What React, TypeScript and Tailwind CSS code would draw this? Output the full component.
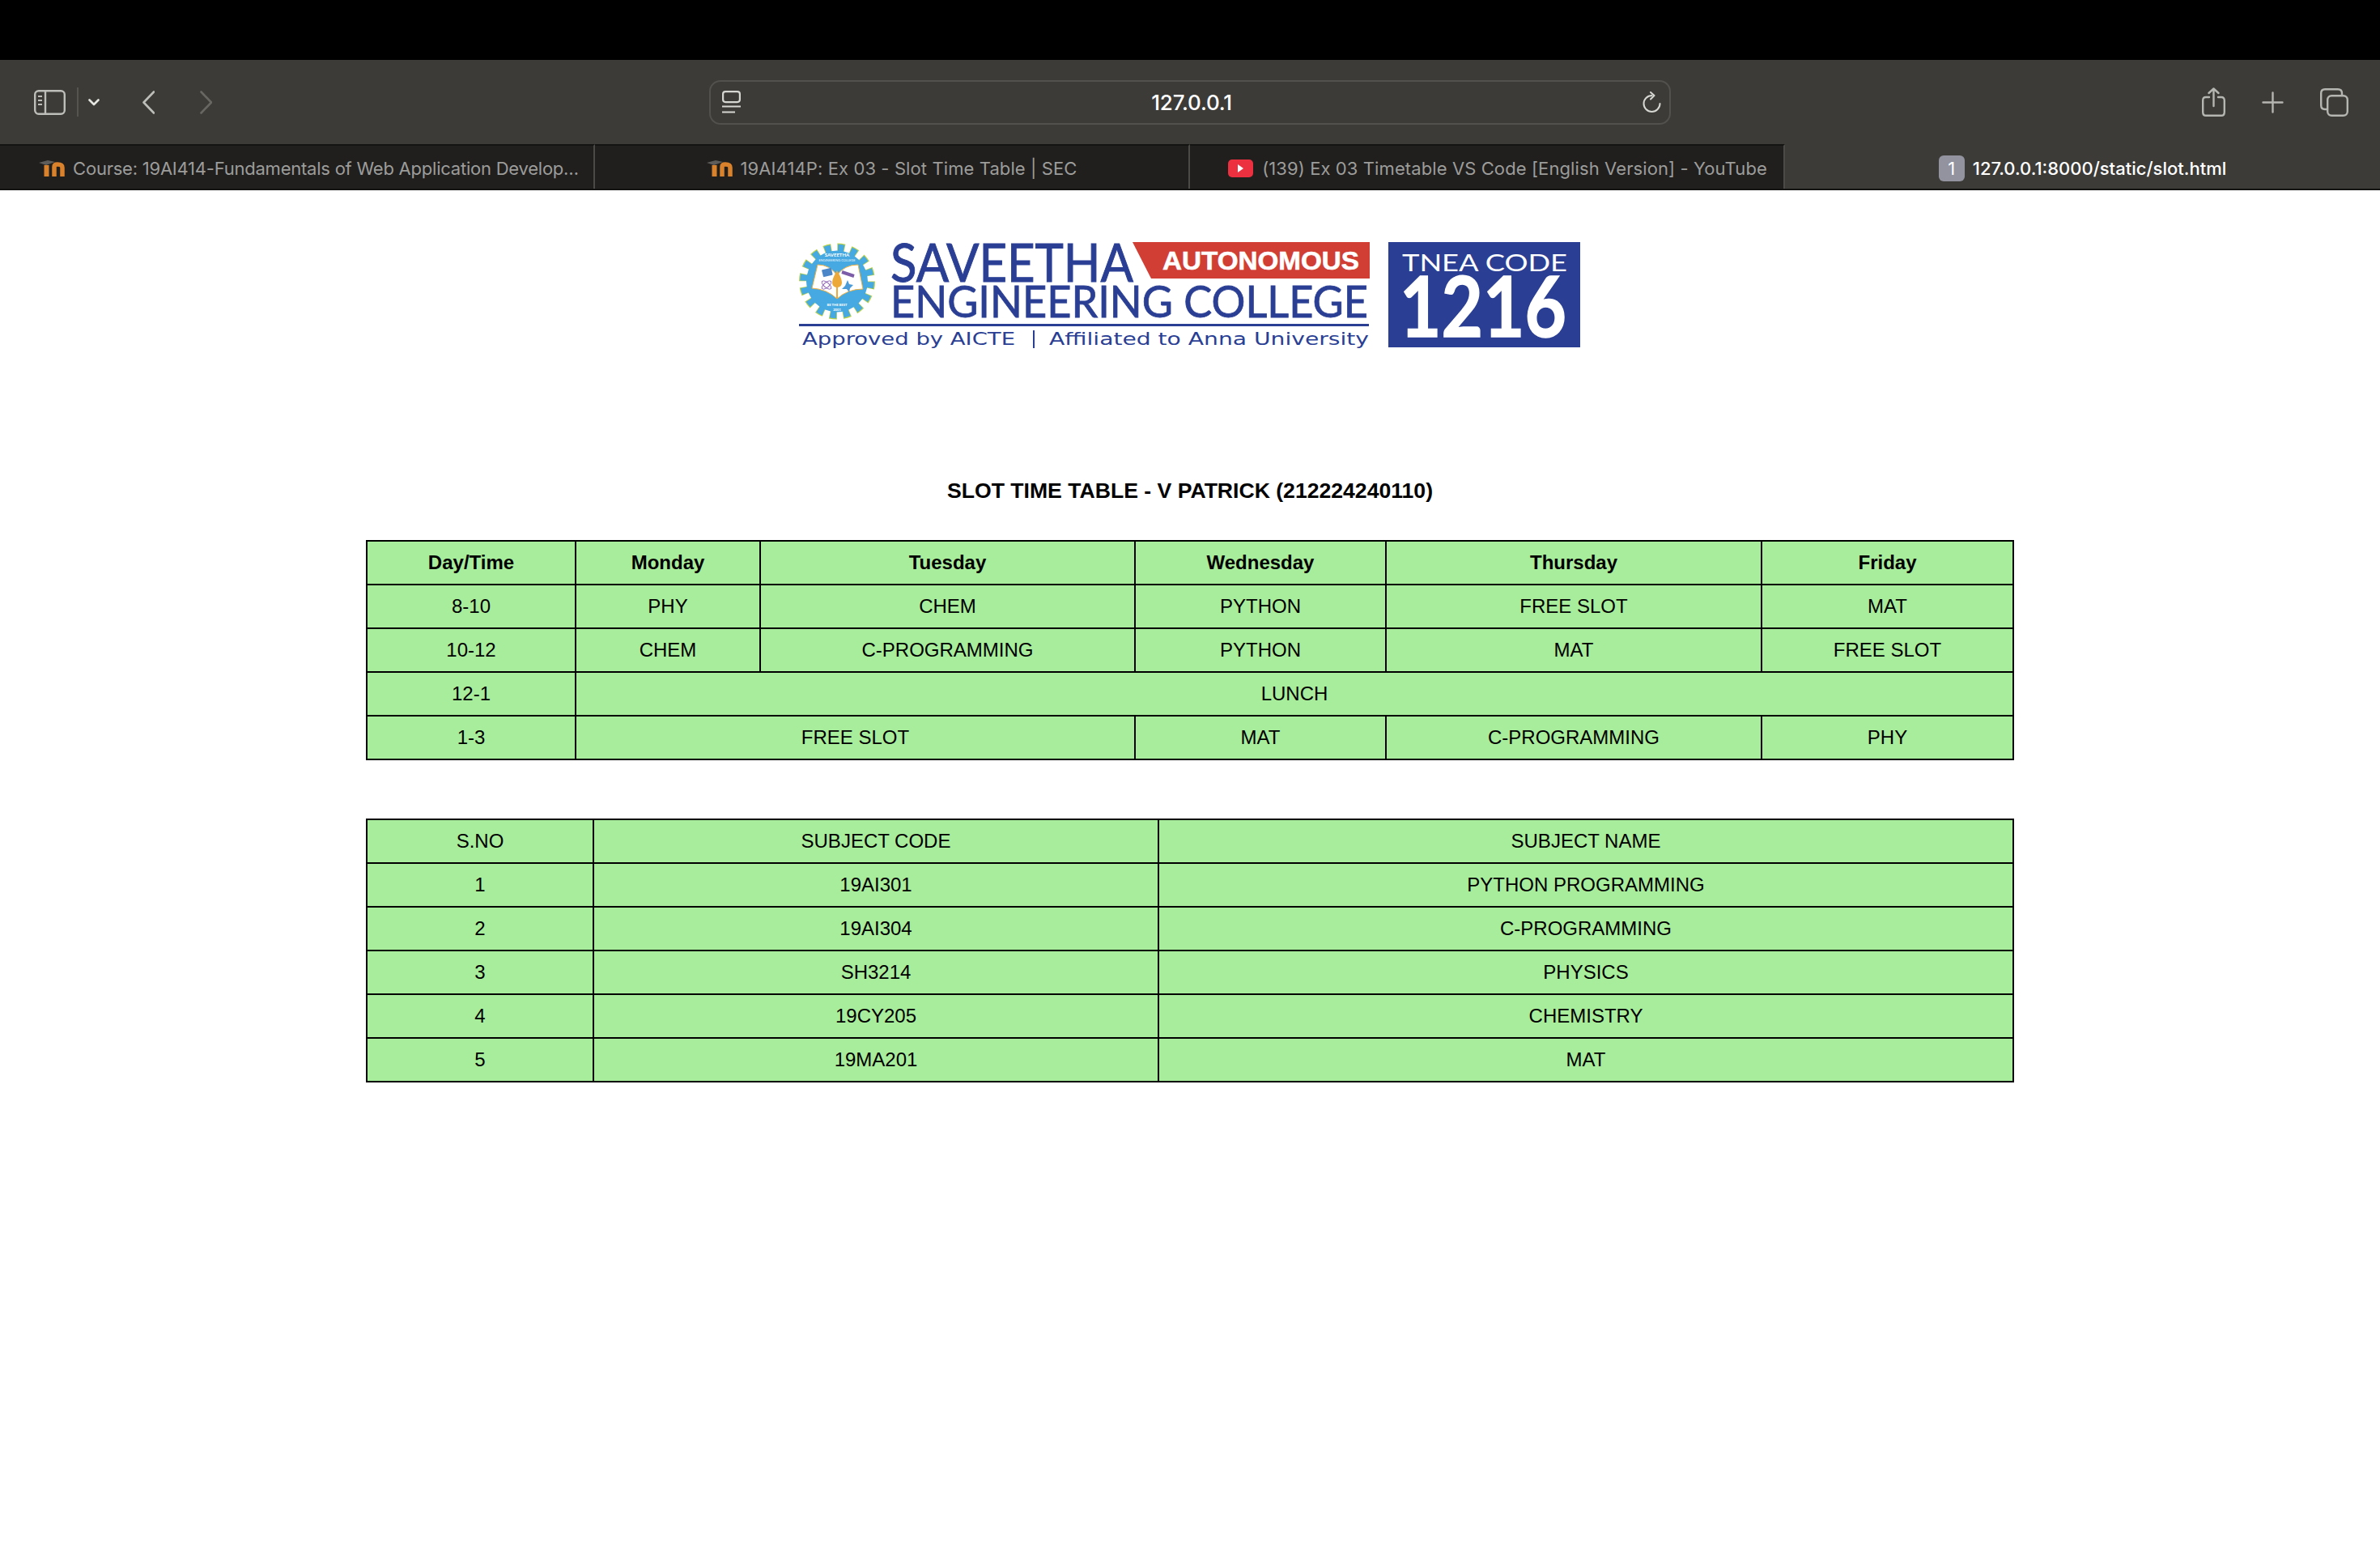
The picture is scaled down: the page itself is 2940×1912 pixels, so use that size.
import React from 'react';

type Cell = { text: string; span?: number };

const slotColumns = [258, 228, 463, 310, 464, 311];
const slotRows: Cell[][] = [
  [{ text: 'Day/Time' }, { text: 'Monday' }, { text: 'Tuesday' }, { text: 'Wednesday' }, { text: 'Thursday' }, { text: 'Friday' }],
  [{ text: '8-10' }, { text: 'PHY' }, { text: 'CHEM' }, { text: 'PYTHON' }, { text: 'FREE SLOT' }, { text: 'MAT' }],
  [{ text: '10-12' }, { text: 'CHEM' }, { text: 'C-PROGRAMMING' }, { text: 'PYTHON' }, { text: 'MAT' }, { text: 'FREE SLOT' }],
  [{ text: '12-1' }, { text: 'LUNCH', span: 5 }],
  [{ text: '1-3' }, { text: 'FREE SLOT', span: 2 }, { text: 'MAT' }, { text: 'C-PROGRAMMING' }, { text: 'PHY' }],
];

const subjectColumns = [280, 698, 1056];
const subjectRows: Cell[][] = [
  [{ text: 'S.NO' }, { text: 'SUBJECT CODE' }, { text: 'SUBJECT NAME' }],
  [{ text: '1' }, { text: '19AI301' }, { text: 'PYTHON PROGRAMMING' }],
  [{ text: '2' }, { text: '19AI304' }, { text: 'C-PROGRAMMING' }],
  [{ text: '3' }, { text: 'SH3214' }, { text: 'PHYSICS' }],
  [{ text: '4' }, { text: '19CY205' }, { text: 'CHEMISTRY' }],
  [{ text: '5' }, { text: '19MA201' }, { text: 'MAT' }],
];

const MoodleIcon = () => (
  <svg width="32" height="22" viewBox="0 0 32 22" className="shrink-0 blur-[0.5px]">
    <path d="M0 4 L11 1 L20 3 L9 7 Z" fill="#5e5d5b" />
    <path d="M9.5 7 V21" stroke="#d9822b" strokeWidth="6" />
    <path d="M19 21 V9 Q19 6 23 6 Q29 6 29 10 V21" stroke="#d9822b" strokeWidth="5.5" fill="none" />
  </svg>
);

const YoutubeIcon = () => (
  <svg width="31" height="22" viewBox="0 0 31 22" className="shrink-0">
    <rect width="31" height="22" rx="5" fill="#ed3040" />
    <path d="M12 6 L19 11 L12 16 Z" fill="#fff" />
  </svg>
);

const SidebarIcon = () => (
  <svg width="39" height="31" viewBox="0 0 39 31" fill="none" stroke="#bdbdb9" strokeWidth="2.4">
    <rect x="1.2" y="1.2" width="36.6" height="28.6" rx="4.5" />
    <path d="M14 1 V30" />
    <path d="M5 8 H10 M5 13 H10 M5 18 H10" strokeWidth="1.8" />
  </svg>
);

const Chevron = ({ d, color, w, h, width = 2.6 }: { d: string; color: string; w: number; h: number; width?: number }) => (
  <svg width={w} height={h} viewBox={`0 0 ${w} ${h}`} fill="none" stroke={color} strokeWidth={width} strokeLinecap="round" strokeLinejoin="round" className="shrink-0">
    <path d={d} />
  </svg>
);

const PageIcon = () => (
  <svg width="23" height="28" viewBox="0 0 23 28" fill="none" stroke="#d6d6d3" strokeWidth="2.2" className="shrink-0">
    <rect x="1.1" y="1.1" width="20.8" height="13" rx="3" />
    <path d="M0 19.5 H23 M0 26.5 H16" />
  </svg>
);

const ReloadIcon = () => (
  <svg width="23" height="26" viewBox="0 0 23 26" fill="none" stroke="#d6d6d3" strokeWidth="2" strokeLinecap="round" strokeLinejoin="round" className="shrink-0">
    <path d="M11.5 5 A10 10 0 1 0 21.5 15" />
    <path d="M10 1 L14.5 5 L10 9.5" />
  </svg>
);

const ShareIcon = () => (
  <svg width="29" height="36" viewBox="0 0 29 36" fill="none" stroke="#b5b5b1" strokeWidth="2.4" strokeLinecap="round" strokeLinejoin="round">
    <path d="M9 12 H5 Q1.2 12 1.2 16 V30.5 Q1.2 34.8 5 34.8 H24 Q27.8 34.8 27.8 30.5 V16 Q27.8 12 24 12 H20" />
    <path d="M14.5 23 V1.5 M8.5 7 L14.5 1.5 L20.5 7" />
  </svg>
);

const PlusIcon = () => (
  <svg width="27" height="27" viewBox="0 0 27 27" fill="none" stroke="#b5b5b1" strokeWidth="2.4" strokeLinecap="round">
    <path d="M1.5 13.5 H25.5 M13.5 1.5 V25.5" />
  </svg>
);

const TabsIcon = () => (
  <svg width="35" height="35" viewBox="0 0 35 35" fill="none" stroke="#b5b5b1" strokeWidth="2.4">
    <path d="M8 26 H6 Q1.2 26 1.2 21 V6 Q1.2 1.2 6 1.2 H22 Q27 1.2 27 6 V8.5" />
    <rect x="9.2" y="9.2" width="24.6" height="24.6" rx="5" />
  </svg>
);

const Logo = () => {
  const sans = "font-['Lato',sans-serif]";
  const arial = "font-['Liberation_Sans',sans-serif]";
  const deja = "font-['DejaVu_Sans',sans-serif]";
  return (
    <svg width="966" height="131" viewBox="0 0 966 131">
      {/* gear seal */}
      <circle cx="47" cy="48.5" r="41.5" fill="none" stroke="#b9d24a" strokeWidth="11" strokeDasharray="9 7.3" />
      <circle cx="47" cy="48.5" r="41.5" fill="none" stroke="#46a9e1" strokeWidth="8.5" strokeDasharray="7.5 8.8" strokeDashoffset="-0.75" />
      <circle cx="47" cy="48.5" r="38" fill="#46a9e1" />
      <path d="M23 28 Q38 28 47 41 V70 Q34 58 16 57 Z" fill="#fff" stroke="#f0b040" strokeWidth="1" />
      <path d="M73 28 Q56 28 47 41 V70 Q60 58 79 58 Z" fill="#fff" stroke="#f0b040" strokeWidth="1" />
      <path d="M47 35 Q53 45 53 50 Q53 55 48 56 V70 H46 V56 Q41 55 41 50 Q41 45 47 35 Z" fill="#eca93a" />
      <rect x="29" y="33" width="12" height="9" rx="1" fill="#4a86c8" transform="rotate(-14 35 38)" />
      <path d="M53 37 L68 42" stroke="#7c5ca8" strokeWidth="4" />
      <ellipse cx="34" cy="53" rx="7" ry="3" fill="none" stroke="#8a5bb0" strokeWidth="1" transform="rotate(40 34 53)" />
      <ellipse cx="34" cy="53" rx="7" ry="3" fill="none" stroke="#8a5bb0" strokeWidth="1" transform="rotate(-40 34 53)" />
      <path d="M60 47 L62 52 L67 53 L63 57 L62 62 L59 58 L53 58 L57 54 Z" fill="#4a9bd8" />
      <text x="47" y="18" textAnchor="middle" fontSize="6" fontWeight="700" fill="#fff" className={sans}>SAVEETHA</text>
      <text x="47" y="24" textAnchor="middle" fontSize="4" fill="#eaf6fd" className={sans}>ENGINEERING COLLEGE</text>
      <text x="47" y="79" textAnchor="middle" fontSize="4.2" fontWeight="700" fill="#fff" className={sans}>BE THE BEST</text>
      <text x="47" y="85" textAnchor="middle" fontSize="4.2" fontWeight="700" fill="#fff" className={sans}>2001</text>
      {/* wordmark */}
      <path d="M412 0 H705 V45 H435 Z" fill="#d03e34" />
      <text x="449" y="34" fontSize="32" fontWeight="700" fill="#fff" stroke="#fff" strokeWidth="0.6" textLength="243" lengthAdjust="spacingAndGlyphs" className={arial}>AUTONOMOUS</text>
      <text x="113" y="49" fontSize="66" fill="#2a3f94" stroke="#2a3f94" strokeWidth="1" textLength="300" lengthAdjust="spacingAndGlyphs" className={sans}>SAVEETHA</text>
      <text x="113" y="93" fontSize="54" fill="#2a3f94" stroke="#2a3f94" strokeWidth="0.8" textLength="590" lengthAdjust="spacingAndGlyphs" className={sans}>ENGINEERING COLLEGE</text>
      <rect x="0" y="101" width="704" height="3" fill="#2a3f94" />
      <text x="4" y="127" fontSize="22" fill="#2a3f94" textLength="263" lengthAdjust="spacingAndGlyphs" className={deja}>Approved by AICTE</text>
      <rect x="289" y="109" width="2" height="22" fill="#2a3f94" />
      <text x="309" y="127" fontSize="22" fill="#2a3f94" textLength="395" lengthAdjust="spacingAndGlyphs" className={deja}>Affiliated to Anna University</text>
      {/* tnea box */}
      <rect x="728" y="0" width="237" height="130" fill="#2a3f94" />
      <text x="745" y="36" fontSize="28" fill="#fff" textLength="204" lengthAdjust="spacingAndGlyphs" className={sans}>TNEA CODE</text>
      <text x="742" y="117" fontSize="104" fontWeight="700" fill="#fff" stroke="#fff" strokeWidth="1.5" textLength="206" lengthAdjust="spacingAndGlyphs" className={sans}>1216</text>
    </svg>
  );
};

const Tab = ({ children, text, className, textClass }: { children?: React.ReactNode; text: string; className: string; textClass: string }) => (
  <div className={`flex items-center justify-center border-t-2 border-t-[#141413] border-r-2 border-r-[#4b4a47] bg-[#201f1e] pt-[3px] ${className}`}>
    {children}
    <span className={`whitespace-nowrap text-[22px] text-[#9c9c9a] ${textClass}`}>{text}</span>
  </div>
);

const DataTable = ({ columns, rows, boldHeader }: { columns: number[]; rows: Cell[][]; boldHeader?: boolean }) => (
  <table className="w-[2034px] table-fixed border-collapse bg-[#a8ed9b] text-[24px] text-black">
    <colgroup>
      {columns.map((w, i) => (
        <col key={i} style={{ width: w }} />
      ))}
    </colgroup>
    <tbody>
      {rows.map((row, r) => (
        <tr key={r} className="h-[54px]">
          {row.map((cell, c) => (
            <td
              key={c}
              colSpan={cell.span}
              className={`border-2 border-black p-0 text-center ${boldHeader && r === 0 ? 'font-bold' : ''}`}
            >
              {cell.text}
            </td>
          ))}
        </tr>
      ))}
    </tbody>
  </table>
);

const App = () => {
  return (
    <div className="min-h-[1912px] bg-white font-['Inter',sans-serif]">
      <div className="h-[74px] bg-black" />

      <div className="flex h-[104px] items-center bg-[#3c3b37]">
        <div className="flex w-[876px] items-center pl-[42px]">
          <SidebarIcon />
          <div className="ml-[14px] h-[36px] w-[2px] bg-[#55544f]" />
          <div className="ml-[12px] flex">
            <Chevron d="M1.5 1.5 L7 7 L12.5 1.5" color="#e4e4e1" w={14} h={9} />
          </div>
          <div className="ml-[53px] flex">
            <Chevron d="M14 1.5 L1.5 14.5 L14 27.5" color="#bdbdb9" w={15} h={29} />
          </div>
          <div className="ml-[56px] flex">
            <Chevron d="M1.5 1.5 L14 14.5 L1.5 27.5" color="#686762" w={15} h={29} />
          </div>
        </div>

        <div className="flex h-[55px] w-[1188px] items-center rounded-[14px] border-2 border-[#52514d] pl-[14px] pr-[10px]">
          <PageIcon />
          <span className="flex-1 text-center text-[26px] font-medium tracking-[-0.2px] text-white">127.0.0.1</span>
          <ReloadIcon />
        </div>

        <div className="flex flex-1 items-center pl-[656px]">
          <ShareIcon />
          <div className="ml-[45px] flex"><PlusIcon /></div>
          <div className="ml-[45px] flex"><TabsIcon /></div>
        </div>
      </div>

      <div className="grid h-[57px] grid-cols-4 border-b-2 border-b-[#141413] bg-[#3c3b37]">
        <Tab text="Course: 19AI414-Fundamentals of Web Application Develop…" textClass="tracking-[-0.23px]" className="gap-[10px] pl-[48px] pr-[18px]">
          <MoodleIcon />
        </Tab>
        <Tab text="19AI414P: Ex 03 - Slot Time Table | SEC" textClass="tracking-[0.1px]" className="gap-[10px]">
          <MoodleIcon />
        </Tab>
        <Tab text="(139) Ex 03 Timetable VS Code [English Version] - YouTube" textClass="tracking-[0.1px]" className="gap-[11px] pl-[50px] pr-[23px]">
          <YoutubeIcon />
        </Tab>
        <div className="flex items-center justify-center gap-[10px] pt-[5px]">
          <span className="flex h-[32px] w-[32px] items-center justify-center rounded-[6px] bg-[#92939f] text-[22px] text-white">1</span>
          <span className="whitespace-nowrap text-[22px] font-medium text-white">127.0.0.1:8000/static/slot.html</span>
        </div>
      </div>

      <div className="mx-auto flex w-[2036px] flex-col items-center pt-[64px] font-['Liberation_Sans',sans-serif]">
        <Logo />
        <h1 className="mt-[160px] text-[26.6px] font-bold leading-[32px] text-black">
          SLOT TIME TABLE - V PATRICK (212224240110)
        </h1>
        <div className="mt-[45px] w-full">
          <DataTable columns={slotColumns} rows={slotRows} boldHeader />
        </div>
        <div className="mt-[72px] w-full">
          <DataTable columns={subjectColumns} rows={subjectRows} />
        </div>
      </div>
    </div>
  );
};

export default App;
